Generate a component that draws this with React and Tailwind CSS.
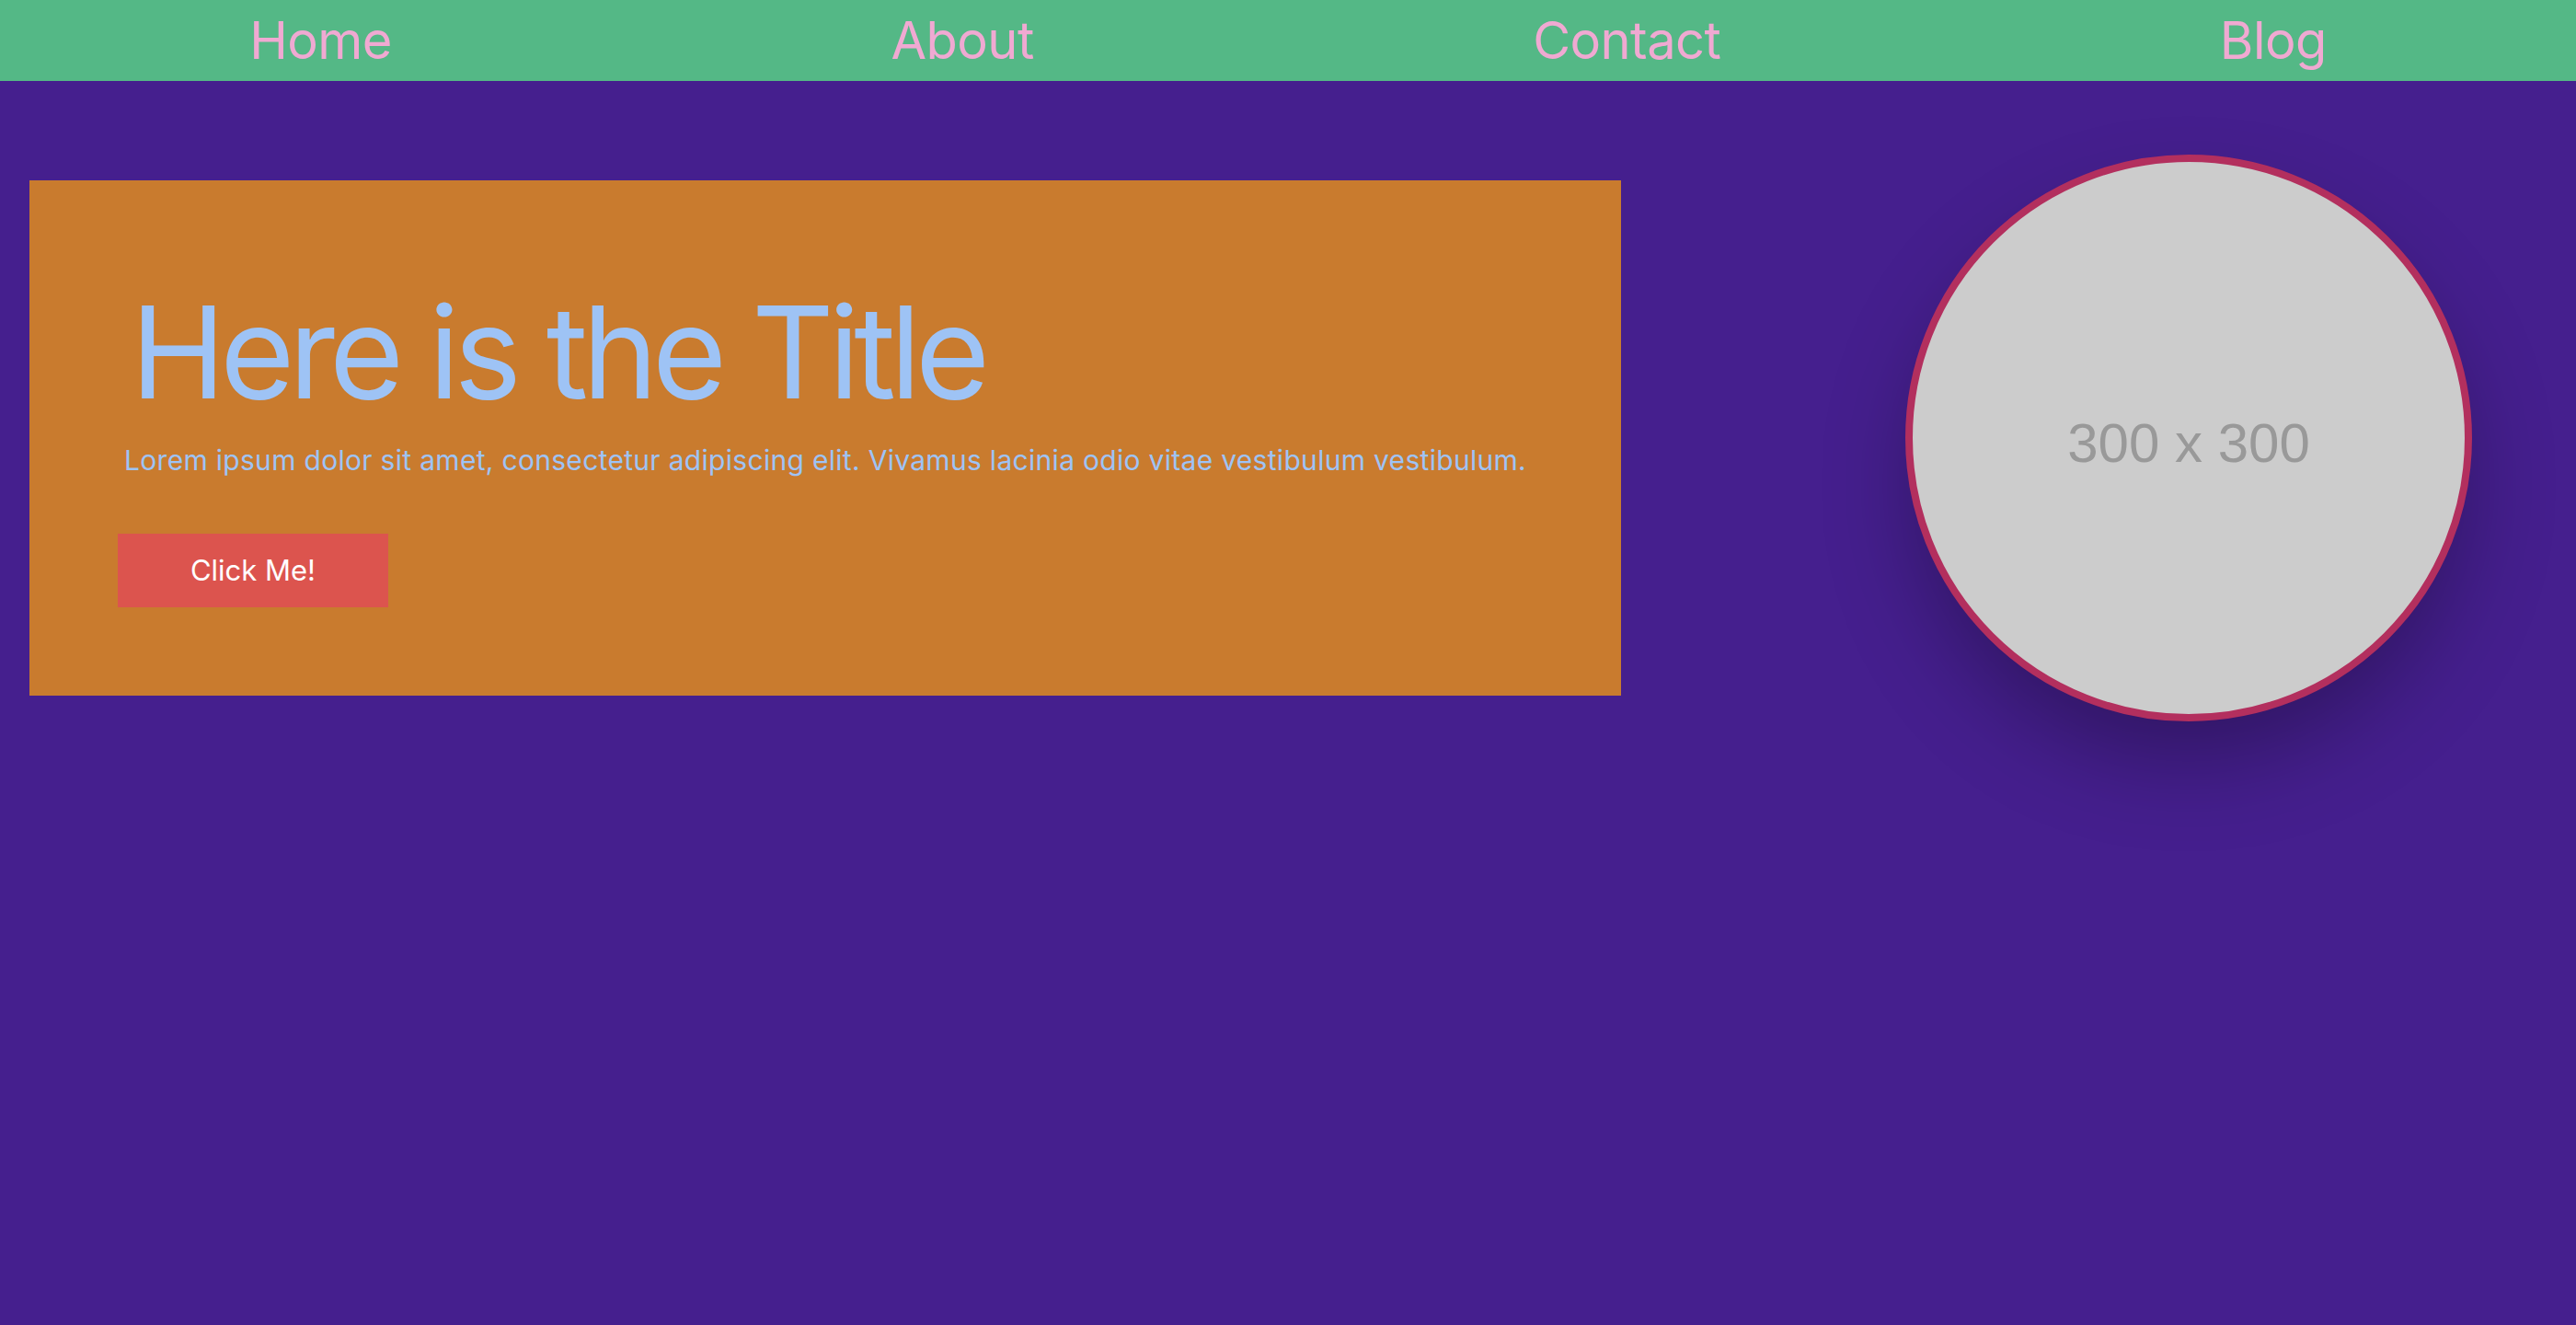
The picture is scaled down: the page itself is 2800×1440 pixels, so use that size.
import React from 'react';

const links = ['Home', 'About', 'Contact', 'Blog'];

const App = () => {
  return (
    <div className="min-h-screen bg-[#451f8e] font-['Inter','Liberation_Sans',sans-serif]">
      <nav className="h-[88px] bg-[#54b886] flex items-center justify-around">
        {links.map((l) => (
          <a key={l} href="#" className="text-[56px] leading-none text-[#f0a9d2] tracking-[-0.01em]">
            {l}
          </a>
        ))}
      </nav>

      <main className="mt-[80px] flex items-center pl-[32px] pr-[113px] justify-between">
        <section className="w-[1730px] bg-[#c97b2e] px-[96px] pb-[96px] pt-[117px]">
          <h1 className="text-[139px] leading-none text-[#9ec3f5] ml-[14px] tracking-[-0.044em]">Here is the Title</h1>
          <p className="mt-[26px] text-[30px] leading-[45px] text-[#9ec3f5] ml-[7px] tracking-[0.01em]">
            Lorem ipsum dolor sit amet, consectetur adipiscing elit. Vivamus lacinia odio vitae vestibulum vestibulum.
          </p>
          <button className="mt-[57px] w-[294px] h-[80px] bg-[#dc544e] text-white text-[31px]">Click Me!</button>
        </section>

        <div className="w-[616px] h-[616px] rounded-full border-[8px] border-[#b32f5e] bg-[#cccccc] shadow-[0_50px_100px_-10px_rgba(0,0,0,0.3)] flex items-center justify-center">
          <span className="text-[60px] text-[#999999] font-['Liberation_Sans',sans-serif] mt-[12px]">300 x 300</span>
        </div>
      </main>
    </div>
  );
};

export default App;
